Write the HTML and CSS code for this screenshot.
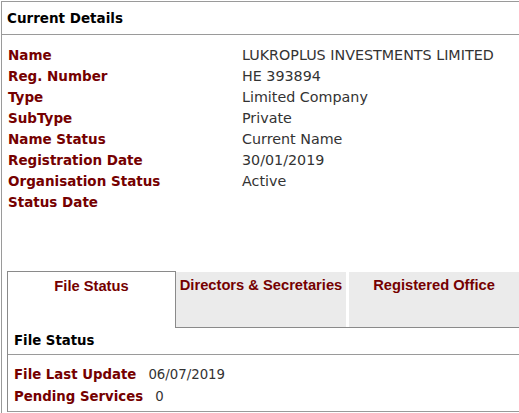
FILE: index.html
```html
<!DOCTYPE html>
<html>
<head>
<meta charset="utf-8">
<link rel="stylesheet" href="styles.css">
</head>
<body>
<div class="page">
  <div class="head">Current Details</div>
  <div class="details">
    <div class="lbl">Name</div><div class="val">LUKROPLUS INVESTMENTS LIMITED</div>
    <div class="lbl">Reg. Number</div><div class="val">HE 393894</div>
    <div class="lbl">Type</div><div class="val">Limited Company</div>
    <div class="lbl">SubType</div><div class="val">Private</div>
    <div class="lbl">Name Status</div><div class="val">Current Name</div>
    <div class="lbl">Registration Date</div><div class="val">30/01/2019</div>
    <div class="lbl">Organisation Status</div><div class="val">Active</div>
    <div class="lbl">Status Date</div><div class="val"></div>
  </div>
  <div class="tabs">
    <div class="tab active">File Status</div>
    <div class="tab-rest">
      <div class="tab">Directors &amp; Secretaries</div>
      <div class="tab last">Registered Office</div>
    </div>
  </div>
  <div class="panel">
    <div class="panel-head">File Status</div>
    <div class="panel-body">
      <div class="prow"><span class="plbl">File Last Update</span><span class="pval">06/07/2019</span></div>
      <div class="prow"><span class="plbl">Pending Services</span><span class="pval">0</span></div>
    </div>
  </div>
</div>
</body>
</html>
```
FILE: styles.css
```css
html, body {
  margin: 0;
  padding: 0;
  background: #fff;
}
body {
  font-family: "DejaVu Sans", Verdana, sans-serif;
  font-size: 13.5px;
  color: #222;
  overflow: hidden;
}
.page {
  margin: 1px 0 0 1px;
  border-top: 1px solid #9a9a9a;
  border-left: 1px solid #9a9a9a;
  height: 420px;
}
.head {
  height: 32px;
  line-height: 32px;
  padding-left: 5px;
  font-size: 13.5px;
  font-weight: bold;
  color: #000;
  border-bottom: 1px solid #9a9a9a;
}
.details {
  display: grid;
  grid-template-columns: 234px 1fr;
  grid-auto-rows: 21px;
  line-height: 21px;
  padding: 10px 0 0 6px;
}
.lbl {
  font-size: 13.5px;
  font-weight: bold;
  color: #750000;
}
.val {
  font-size: 14.3px;
  color: #333;
}
.tabs {
  display: flex;
  margin: 58px 0 0 5px;
  align-items: stretch;
}
.tab {
  font-family: "Liberation Sans", Arial, sans-serif;
  font-weight: bold;
  font-size: 14.7px;
  line-height: 17px;
  color: #750000;
  text-align: center;
  width: 170px;
  height: 55px;
  box-sizing: border-box;
  padding-top: 5px;
  background: #ebebeb;
}
.tab.active {
  background: #fff;
  width: 171px;
  height: 57px;
  padding-top: 6px;
  border: 1px solid #8a8a8a;
  border-bottom: none;
}
.tab-rest {
  flex: 1;
  display: flex;
  gap: 3px;
  padding-top: 1px;
  border-bottom: 1px solid #8a8a8a;
}
.tab.last {
  flex: 1;
}
.panel {
  margin-left: 5px;
  border-left: 1px solid #8a8a8a;
}
.panel-head {
  height: 26px;
  line-height: 26px;
  padding-left: 6px;
  font-size: 13.3px;
  font-weight: bold;
  color: #000;
  border-bottom: 1px solid #9a9a9a;
}
.panel-body {
  padding: 9px 0 3px 6px;
  border-bottom: 1px solid #9a9a9a;
}
.prow {
  line-height: 22px;
  font-size: 13.3px;
}
.plbl {
  font-weight: bold;
  color: #750000;
  margin-right: 12px;
}
.pval {
  color: #333;
}
```
